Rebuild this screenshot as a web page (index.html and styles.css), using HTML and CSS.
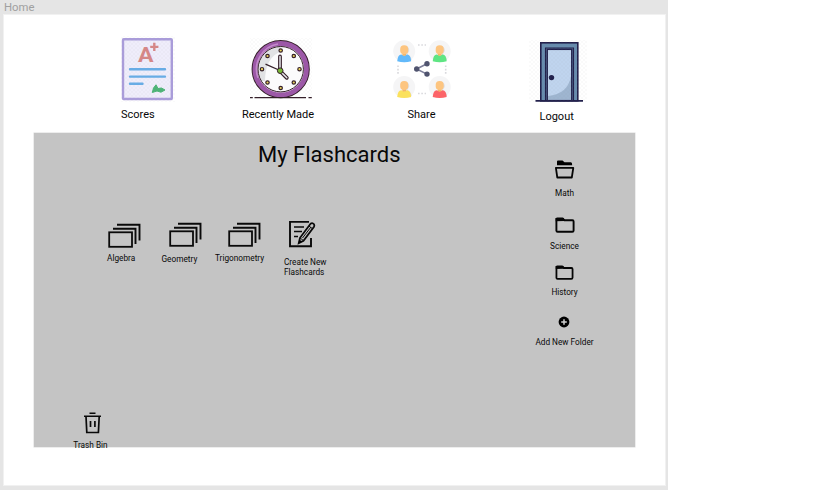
FILE: index.html
```html
<!DOCTYPE html>
<html lang="en">
<head>
<meta charset="utf-8">
<title>Home</title>
<link rel="stylesheet" href="styles.css">
</head>
<body>
<svg class="defs" aria-hidden="true">
  <defs>
    <pattern id="mesh" width="4" height="4" patternUnits="userSpaceOnUse"><path d="M0 0L4 4M4 0L0 4" stroke="#808090" stroke-opacity=".08" stroke-width=".6"/></pattern>
    <symbol id="stack" viewBox="0 0 34 26">
      <path d="M9 1.700H31.500V17.500M5 5.700H27.500V21" fill="none" stroke="#0a0a0a" stroke-width="1.900"/>
      <rect x="1.200" y="9.300" width="22.800" height="14.500" fill="#c6c6c6" stroke="#0a0a0a" stroke-width="1.800"/>
    </symbol>
    <symbol id="folder" viewBox="0 0 20 16">
      <path d="M1.400 14V2H8L9.500 3.200H17.400Q18.600 3.200 18.600 4.400V13.400Q18.600 14.800 17.300 14.800H2.600Q1.400 14.800 1.400 13.500Z" fill="none" stroke="#050505" stroke-width="1.900"/>
      <path d="M.7 4.300V2Q.7.4 2 .4H7.600Q9 .4 9.500 2.700V4.100Z" fill="#050505"/>
    </symbol>
    <g id="person">
      <circle r="11" fill="#f5f5f6"/>
      <path d="M2-5.500Q5.500-4 5 0L3 3Q7 5 7.500 9H2Z" fill="#dedee2"/>
      <path d="M-7 10Q-6.500 3.400-3 3.200L0 4.200L3 3.200Q6.500 3.400 7 10Q0 12-7 10Z" fill="currentColor"/>
      <path d="M-1.800 1H1.800V4Q0 5-1.800 4Z" fill="#f3b568"/>
      <rect x="-4" y="-6" width="8" height="9" rx="3.800" fill="#fdc580"/>
    </g>
  </defs>
</svg>
<div class="canvas">
  <div class="frame-name">Home</div>
  <main class="frame">
    <nav class="nav">
      <a class="nav-item scores">
        <svg width="54" height="66" viewBox="121 36 54 66">
          <rect x="123" y="39.300" width="48.800" height="59.700" rx=".7" fill="#efedfb" stroke="#aa9ddb" stroke-width="2.400"/>
          <rect x="121" y="36" width="54" height="66" fill="url(#mesh)"/>
          <text class="grade" x="138" y="61.800" textLength="15.500" lengthAdjust="spacingAndGlyphs">A</text>
          <path d="M154.300 42.800V51M150.200 46.900H158.400" stroke="#d58787" stroke-width="2.400"/>
          <path d="M130 69.300H165M130 76.600H165M130 83.700H142.500" stroke="#68ace5" stroke-width="2.400" stroke-linecap="round"/>
          <path d="M152.300 92.500L153.500 88L156 84.800L158 88.500L161.500 88L165 90L161 92.200L157 91Z" fill="#4eb377" stroke="#4eb377" stroke-linejoin="round"/>
        </svg>
        <span>Scores</span>
      </a>
      <a class="nav-item recent">
        <svg width="70" height="66" viewBox="246 36 70 66">
          <rect x="250" y="38" width="62" height="60" fill="url(#mesh)"/>
          <circle cx="280.700" cy="69.200" r="25.700" fill="none" stroke="#35202a" stroke-width="6.800"/>
          <circle cx="280.700" cy="69.200" r="25.700" fill="#fbfbfc" stroke="#9c58a7" stroke-width="4.900"/>
          <path d="M258 78A25.500 25.500 0 0 1 278 44" fill="none" stroke="#c38acb" stroke-width="1.500"/>
          <path d="M257.800 69.200A23 23 0 0 1 280.700 46.300L282 51Q265 57 265 81L261.500 81Q257.800 76 257.800 69.200Z" fill="#e1e2e4"/>
          <circle cx="280.700" cy="69.200" r="22.700" fill="none" stroke="#35202a" stroke-width="1"/>
          <path d="M250 97.600H252.800M254.500 97.600H306M308.500 97.600H311.800" stroke="#35202a" stroke-width="1.400"/>
          <g fill="#ead45b" stroke="#35202a" stroke-width="1.200">
            <circle cx="280.700" cy="50.500" r="1.700"/><circle cx="293.800" cy="56" r="1.700"/><circle cx="299.500" cy="69.200" r="1.700"/><circle cx="293.800" cy="82.500" r="1.700"/><circle cx="280.700" cy="88" r="1.700"/><circle cx="267.500" cy="82.500" r="1.700"/><circle cx="262" cy="69.200" r="1.700"/><circle cx="267.500" cy="56" r="1.700"/>
          </g>
          <path d="M280 70V56.500M280 71L286.800 77.800" stroke="#35202a" stroke-width="3.800" stroke-linecap="round"/>
          <path d="M280 70V56.500M280 71L286.800 77.800" stroke="#e8e8ed" stroke-width="1.500" stroke-linecap="round"/>
          <path d="M265.500 64.200L280 70.500" stroke="#35202a" stroke-width="1.300"/>
          <circle cx="280.200" cy="70.700" r="2.800" fill="#79b936" stroke="#35202a"/>
        </svg>
        <span>Recently Made</span>
      </a>
      <a class="nav-item share">
        <svg width="60" height="66" viewBox="392 36 60 66">
          <g transform="translate(404.200 51.200)" color="#62b9fa"><use href="#person"/></g>
          <g transform="translate(439.700 51.200)" color="#5fe583"><use href="#person"/></g>
          <g transform="translate(404.200 87)" color="#fbe15c"><use href="#person"/></g>
          <g transform="translate(439.700 87)" color="#fc6468"><use href="#person"/></g>
          <path d="M418 45H426M418 93.500H426M398 65.500V74M445.700 65.500V74" stroke="#d9d9dd" stroke-width="1.600" stroke-dasharray="1.600 1.700"/>
          <path d="M427 63.700L416.500 69L427 74.100" fill="none" stroke="#7b7d98" stroke-width="1.600"/>
          <g fill="#50546f"><circle cx="427" cy="63.700" r="2.700"/><circle cx="416.700" cy="69" r="2.700"/><circle cx="427" cy="74.100" r="2.700"/></g>
        </svg>
        <span>Share</span>
      </a>
      <a class="nav-item logout">
        <svg width="58" height="68" viewBox="529 36 58 68">
          <rect x="540.800" y="42.800" width="37" height="58" fill="#668bad" stroke="#211f4b" stroke-width="1.600"/>
          <path d="M545.500 100V48H573.500V100" fill="#668bad" stroke="#211f4b" stroke-width="1.100"/>
          <rect x="547.200" y="49.300" width="24.600" height="51" fill="#bfd4ee" stroke="#211f4b" stroke-width="1.500"/>
          <path d="M571 76Q568 94 548 96V99.700H571Z" fill="#9eb5d0"/>
          <circle cx="551.500" cy="77.600" r="2.700" fill="#211f4b"/>
          <path d="M535.500 100.900H583" stroke="#211f4b" stroke-width="1.900"/>
          <rect x="529" y="40" width="58" height="62" fill="url(#mesh)"/>
        </svg>
        <span>Logout</span>
      </a>
    </nav>
    <section class="panel">
      <div class="workspace">
        <h1>My Flashcards</h1>
        <div class="cards">
          <div class="card algebra"><svg width="34" height="26"><use href="#stack"/></svg><span>Algebra</span></div>
          <div class="card geometry"><svg width="34" height="26"><use href="#stack"/></svg><span>Geometry</span></div>
          <div class="card trig"><svg width="34" height="26"><use href="#stack"/></svg><span>Trigonometry</span></div>
          <div class="card create">
            <svg width="28" height="28" viewBox="288 220 28 28">
              <path d="M309 221.900H290V246.200H311V238" fill="none" stroke="#0a0a0a" stroke-width="1.900"/>
              <path d="M294 227H304M294 231.500H302M294 236.500H298" stroke="#0a0a0a" stroke-width="1.600"/>
              <path d="M298.800 243L300 237.800L310.500 223.800Q312.400 222.300 314 224.300Q314.700 225.500 314 226.700L303.500 240.700Z" fill="#c4c4c4" stroke="#0a0a0a" stroke-width="1.800"/>
              <path d="M309 226L312.800 229M300 237.800L303.500 240.700M302.500 238L311 227" stroke="#0a0a0a" stroke-width="1"/>
              <path d="M298.500 243.500L299.300 239.500L302.200 241.800Z"/>
            </svg>
            <span>Create New<br>Flashcards</span>
          </div>
        </div>
        <div class="trash">
          <svg width="20" height="24" viewBox="83 411 20 24">
            <path d="M89.500 413.200H95.500M84 416.200H101" stroke="#0a0a0a" stroke-width="1.500"/>
            <path d="M86 416.500L86.800 432.500H98.400L99.200 416.500M90.500 421V427M94.900 421V427" fill="none" stroke="#0a0a0a" stroke-width="1.700"/>
          </svg>
          <span>Trash Bin</span>
        </div>
      </div>
      <aside class="folders">
        <div class="folder math">
          <svg width="20" height="20" viewBox="555 160 20 20">
            <path d="M557 165.300V161.500Q557 160.500 558 160.500H562.500L564.500 162.300H571Q572.200 162.300 572.200 165.300Z"/>
            <path d="M555.900 167.900H573.300L571.800 177.500H557.300Z" fill="none" stroke="#050505" stroke-width="1.800" stroke-linejoin="round"/>
          </svg>
          <span>Math</span>
        </div>
        <div class="folder science"><svg width="20" height="16"><use href="#folder"/></svg><span>Science</span></div>
        <div class="folder history"><svg width="19" height="15"><use href="#folder"/></svg><span>History</span></div>
        <div class="folder add">
          <svg width="12" height="12" viewBox="0 0 12 12"><circle cx="6" cy="6" r="5.400"/><path d="M6 3.200V8.800M3.200 6H8.800" stroke="#d0d0d0" stroke-width="1.500"/></svg>
          <span>Add New Folder</span>
        </div>
      </aside>
    </section>
  </main>
</div>
</body>
</html>
```
FILE: styles.css
```css
* { box-sizing: border-box; }
body { margin: 0; background: #fff; color: #080808; font-family: Roboto, "Liberation Sans", sans-serif; }
svg { display: block; flex: none; }
.defs { width: 0; height: 0; position: absolute; }
.grade { font-size: 21px; font-weight: 700; fill: #d58787; }
.canvas { width: 668px; height: 490px; background: #e5e5e5; padding: 0 2px 4px 3px; }
.frame-name { height: 14px; padding-left: 1px; font-size: 11.3px; line-height: 15px; color: #a0a0a0; }
.frame { height: 472px; background: #fff; border: 1px solid #f1f1f1; }
.nav { display: flex; height: 118px; padding: 21px 0 0 117px; }
.nav-item { display: flex; flex-direction: column; font-size: 11px; line-height: 14px; white-space: nowrap; }
.nav-item span { margin-top: 6px; }
.scores { width: 121px; }
.recent { width: 151px; }
.recent svg { margin-left: 4px; }
.share { width: 142px; }
.share svg { margin-left: -1px; }
.share span { margin-left: 14.5px; }
.logout svg { margin-left: -6px; }
.logout span { margin-left: 4.5px; }
.panel { display: flex; width: 601px; height: 314px; margin-left: 30px; background: #c4c4c4; box-shadow: 0 0 0 .5px #dcdcdc; }
.workspace { width: 496px; }
h1 { margin: 0; padding: 9px 0 0 224px; font-size: 22px; font-weight: 400; line-height: 26px; white-space: nowrap; }
.cards { display: flex; height: 243px; padding: 52px 0 0 73px; }
.card { display: flex; flex-direction: column; font-size: 8.25px; line-height: 10px; white-space: nowrap; }
.algebra { width: 54.5px; padding-top: 3px; }
.algebra svg { margin-left: 1px; }
.geometry { width: 53.5px; padding-top: 2px; }
.geometry svg { margin-left: 7px; }
.geometry span { margin-top: 6px; }
.algebra span { margin-top: 4px; }
.trig { width: 69px; padding-top: 2px; }
.trig svg { margin-left: 13px; }
.trig span { margin-top: 5px; }
.create svg { margin-left: 4px; }
.create span { margin-top: 9px; }
.trash { width: 40px; margin-left: 37px; display: flex; flex-direction: column; align-items: center; font-size: 8.25px; line-height: 10px; white-space: nowrap; }
.trash svg { margin-left: 4px; }
.trash span { margin-top: 5px; margin-left: -1px; }
.folders { width: 69px; padding-top: 27px; }
.folder { display: flex; flex-direction: column; align-items: center; font-size: 8.25px; line-height: 10px; white-space: nowrap; }
.math span { margin-top: 8px; }
.science { margin-top: 19px; }
.science span { margin-top: 8px; }
.history { margin-top: 14px; }
.history span { margin-top: 7px; }
.add { margin-top: 19px; }
.add svg { margin-left: -1px; }
.add span { margin-top: 9px; }
```
